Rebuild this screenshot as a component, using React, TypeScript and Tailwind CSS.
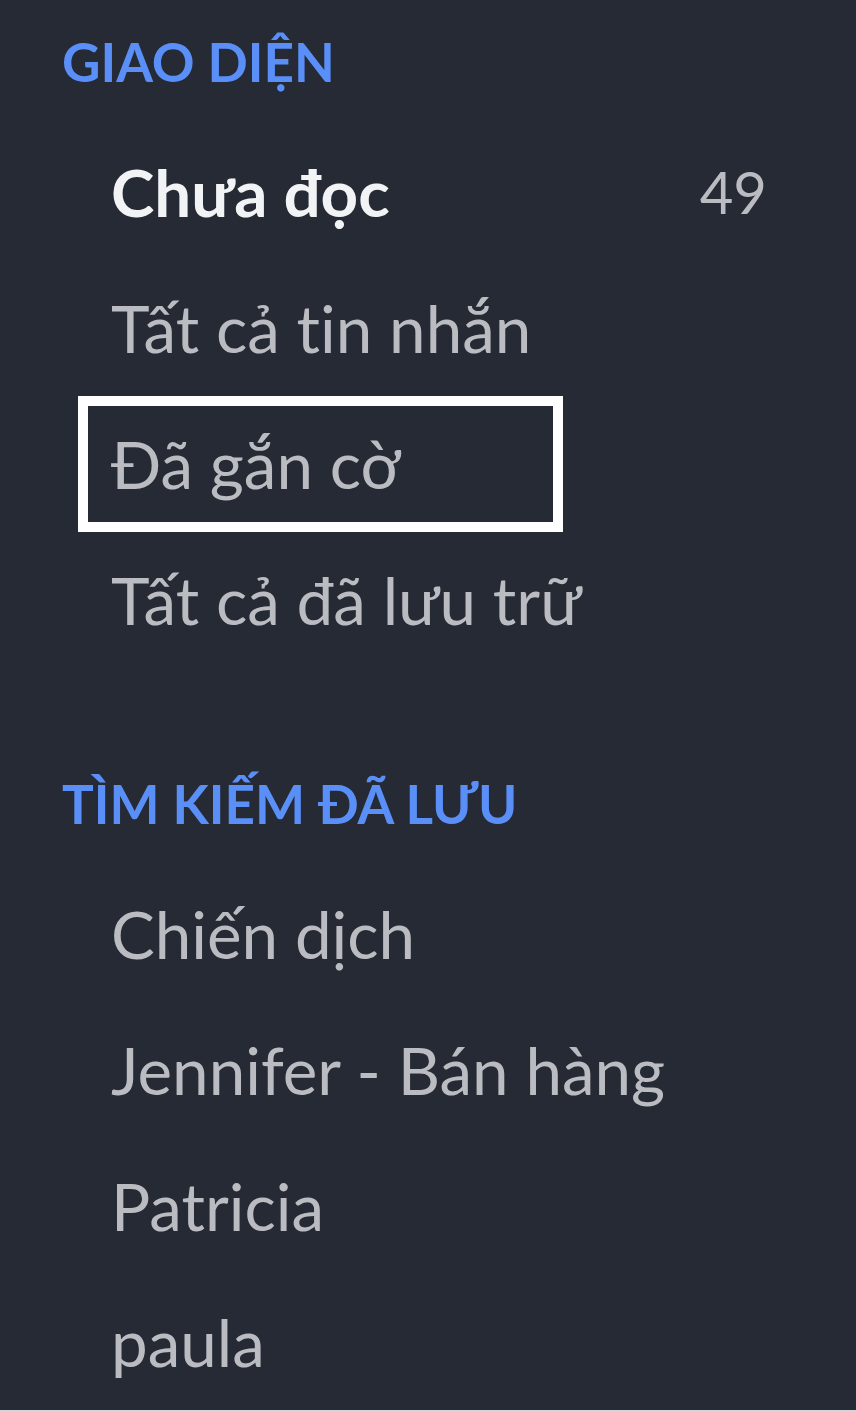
import React from "react";

const font = { fontFamily: "Lato, 'Noto Sans', sans-serif" };

function Header({ children, mt }: { children: React.ReactNode; mt?: boolean }) {
  return (
    <div
      className={`h-[124px] pt-[30px] pl-[62px] text-[53px] leading-[1.2] font-bold text-[#5b8ff8] ${mt ? "mt-[74px]" : ""}`}
    >
      {children}
    </div>
  );
}

function Row({
  label,
  bold,
  count,
  focused,
}: {
  label: string;
  bold?: boolean;
  count?: string;
  focused?: boolean;
}) {
  return (
    <div
      className={`h-[136px] ml-[78px] flex items-center border-[10px] pl-[23px] ${
        focused ? "w-[485px] border-white" : "mr-[79px] border-transparent"
      }`}
    >
      <span
        className={`flex-1 text-[65.5px] leading-[1.2] whitespace-nowrap ${
          bold ? "font-bold text-[#f2f3f5]" : "text-[#babcc1]"
        }`}
      >
        {label}
      </span>
      {count && <span className="text-[58px] leading-[1.2] text-[#babcc1]">{count}</span>}
    </div>
  );
}

export default function App() {
  return (
    <div
      className="w-[856px] h-[1412px] bg-[#d4d5d8] [font-variant-ligatures:none]"
      style={font}
    >
      <div className="bg-[#252a35] h-[1410px] overflow-hidden">
        <Header>GIAO DIỆN</Header>
        <Row label="Chưa đọc" bold count="49" />
        <Row label="Tất cả tin nhắn" />
        <Row label="Đã gắn cờ" focused />
        <Row label="Tất cả đã lưu trữ" />
        <Header mt>TÌM KIẾM ĐÃ LƯU</Header>
        <Row label="Chiến dịch" />
        <Row label="Jennifer - Bán hàng" />
        <Row label="Patricia" />
        <Row label="paula" />
      </div>
    </div>
  );
}
